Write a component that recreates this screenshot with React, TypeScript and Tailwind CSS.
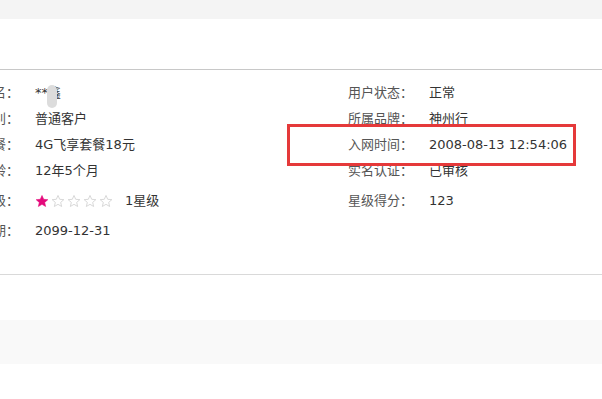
import React from "react";

type Row = { label: string; value: React.ReactNode; h?: string };

function Star({ filled }: { filled?: boolean }) {
  return (
    <svg width="14" height="14" viewBox="0 0 24 24" className="shrink-0">
      <path
        d="M12 2.5l2.9 6.6 7.1.6-5.4 4.7 1.6 7-6.2-3.7-6.2 3.7 1.6-7L2 9.7l7.1-.6z"
        fill={filled ? "#e4097b" : "none"}
        stroke={filled ? "#e4097b" : "#cfcfcf"}
        strokeWidth={filled ? 1 : 1.4}
        strokeLinejoin="round"
      />
    </svg>
  );
}

function Stars() {
  return (
    <div className="flex items-center">
      <div className="flex items-center gap-[2px]">
        <Star filled />
        <Star />
        <Star />
        <Star />
        <Star />
      </div>
      <span className="ml-[12px]">1星级</span>
    </div>
  );
}

function Name() {
  return (
    <span className="relative inline-block">
      **鑫
      <span className="absolute left-[12px] top-[2px] h-[23px] w-[10px] rounded-[5px] bg-[#dcdcdc]" />
    </span>
  );
}

const left: Row[] = [
  { label: "用户姓名：", value: <Name /> },
  { label: "客户类别：", value: "普通客户" },
  { label: "当前套餐：", value: "4G飞享套餐18元" },
  { label: "用户网龄：", value: "12年5个月" },
  { label: "信用星级：", value: <Stars />, h: "h-[34px]" },
  { label: "有效日期：", value: "2099-12-31" },
];

const right: Row[] = [
  { label: "用户状态：", value: "正常" },
  { label: "所属品牌：", value: "神州行" },
  { label: "入网时间：", value: "2008-08-13 12:54:06" },
  { label: "实名认证：", value: "已审核" },
  { label: "星级得分：", value: "123", h: "h-[34px]" },
];

function InfoRow({ row }: { row: Row }) {
  return (
    <div className={`flex items-center ${row.h ?? "h-[26px]"}`}>
      <span className="w-[65px] shrink-0 whitespace-nowrap text-right text-[#555]">
        {row.label}
      </span>
      <span className="ml-[16px] whitespace-nowrap text-[#333]">{row.value}</span>
    </div>
  );
}

export default function App() {
  return (
    <div
      className="relative h-[399px] w-[602px] overflow-hidden bg-white text-[13px]"
      style={{ fontFamily: '"DejaVu Sans", "Noto Sans CJK SC", sans-serif' }}
    >
      <div className="h-[19px] bg-[#f4f4f4]" />
      <div className="h-[51px] border-b border-[#c8c8c8]" />

      <div className="h-[205px] border-b border-[#d9d9d9] pt-[10px]">
        <div className="ml-[-46px] flex">
          <div className="flex w-[394px] flex-col">
            {left.map((r) => (
              <InfoRow key={r.label} row={r} />
            ))}
          </div>
          <div className="flex flex-col">
            {right.map((r) => (
              <InfoRow key={r.label} row={r} />
            ))}
          </div>
        </div>
      </div>

      <div className="mt-[45px] h-[44px] bg-[#f9f9f9]" />

      {/* highlight box */}
      <div className="absolute left-[287px] top-[124px] h-[42px] w-[289px] border-[3px] border-[#e5393a]" />
    </div>
  );
}
